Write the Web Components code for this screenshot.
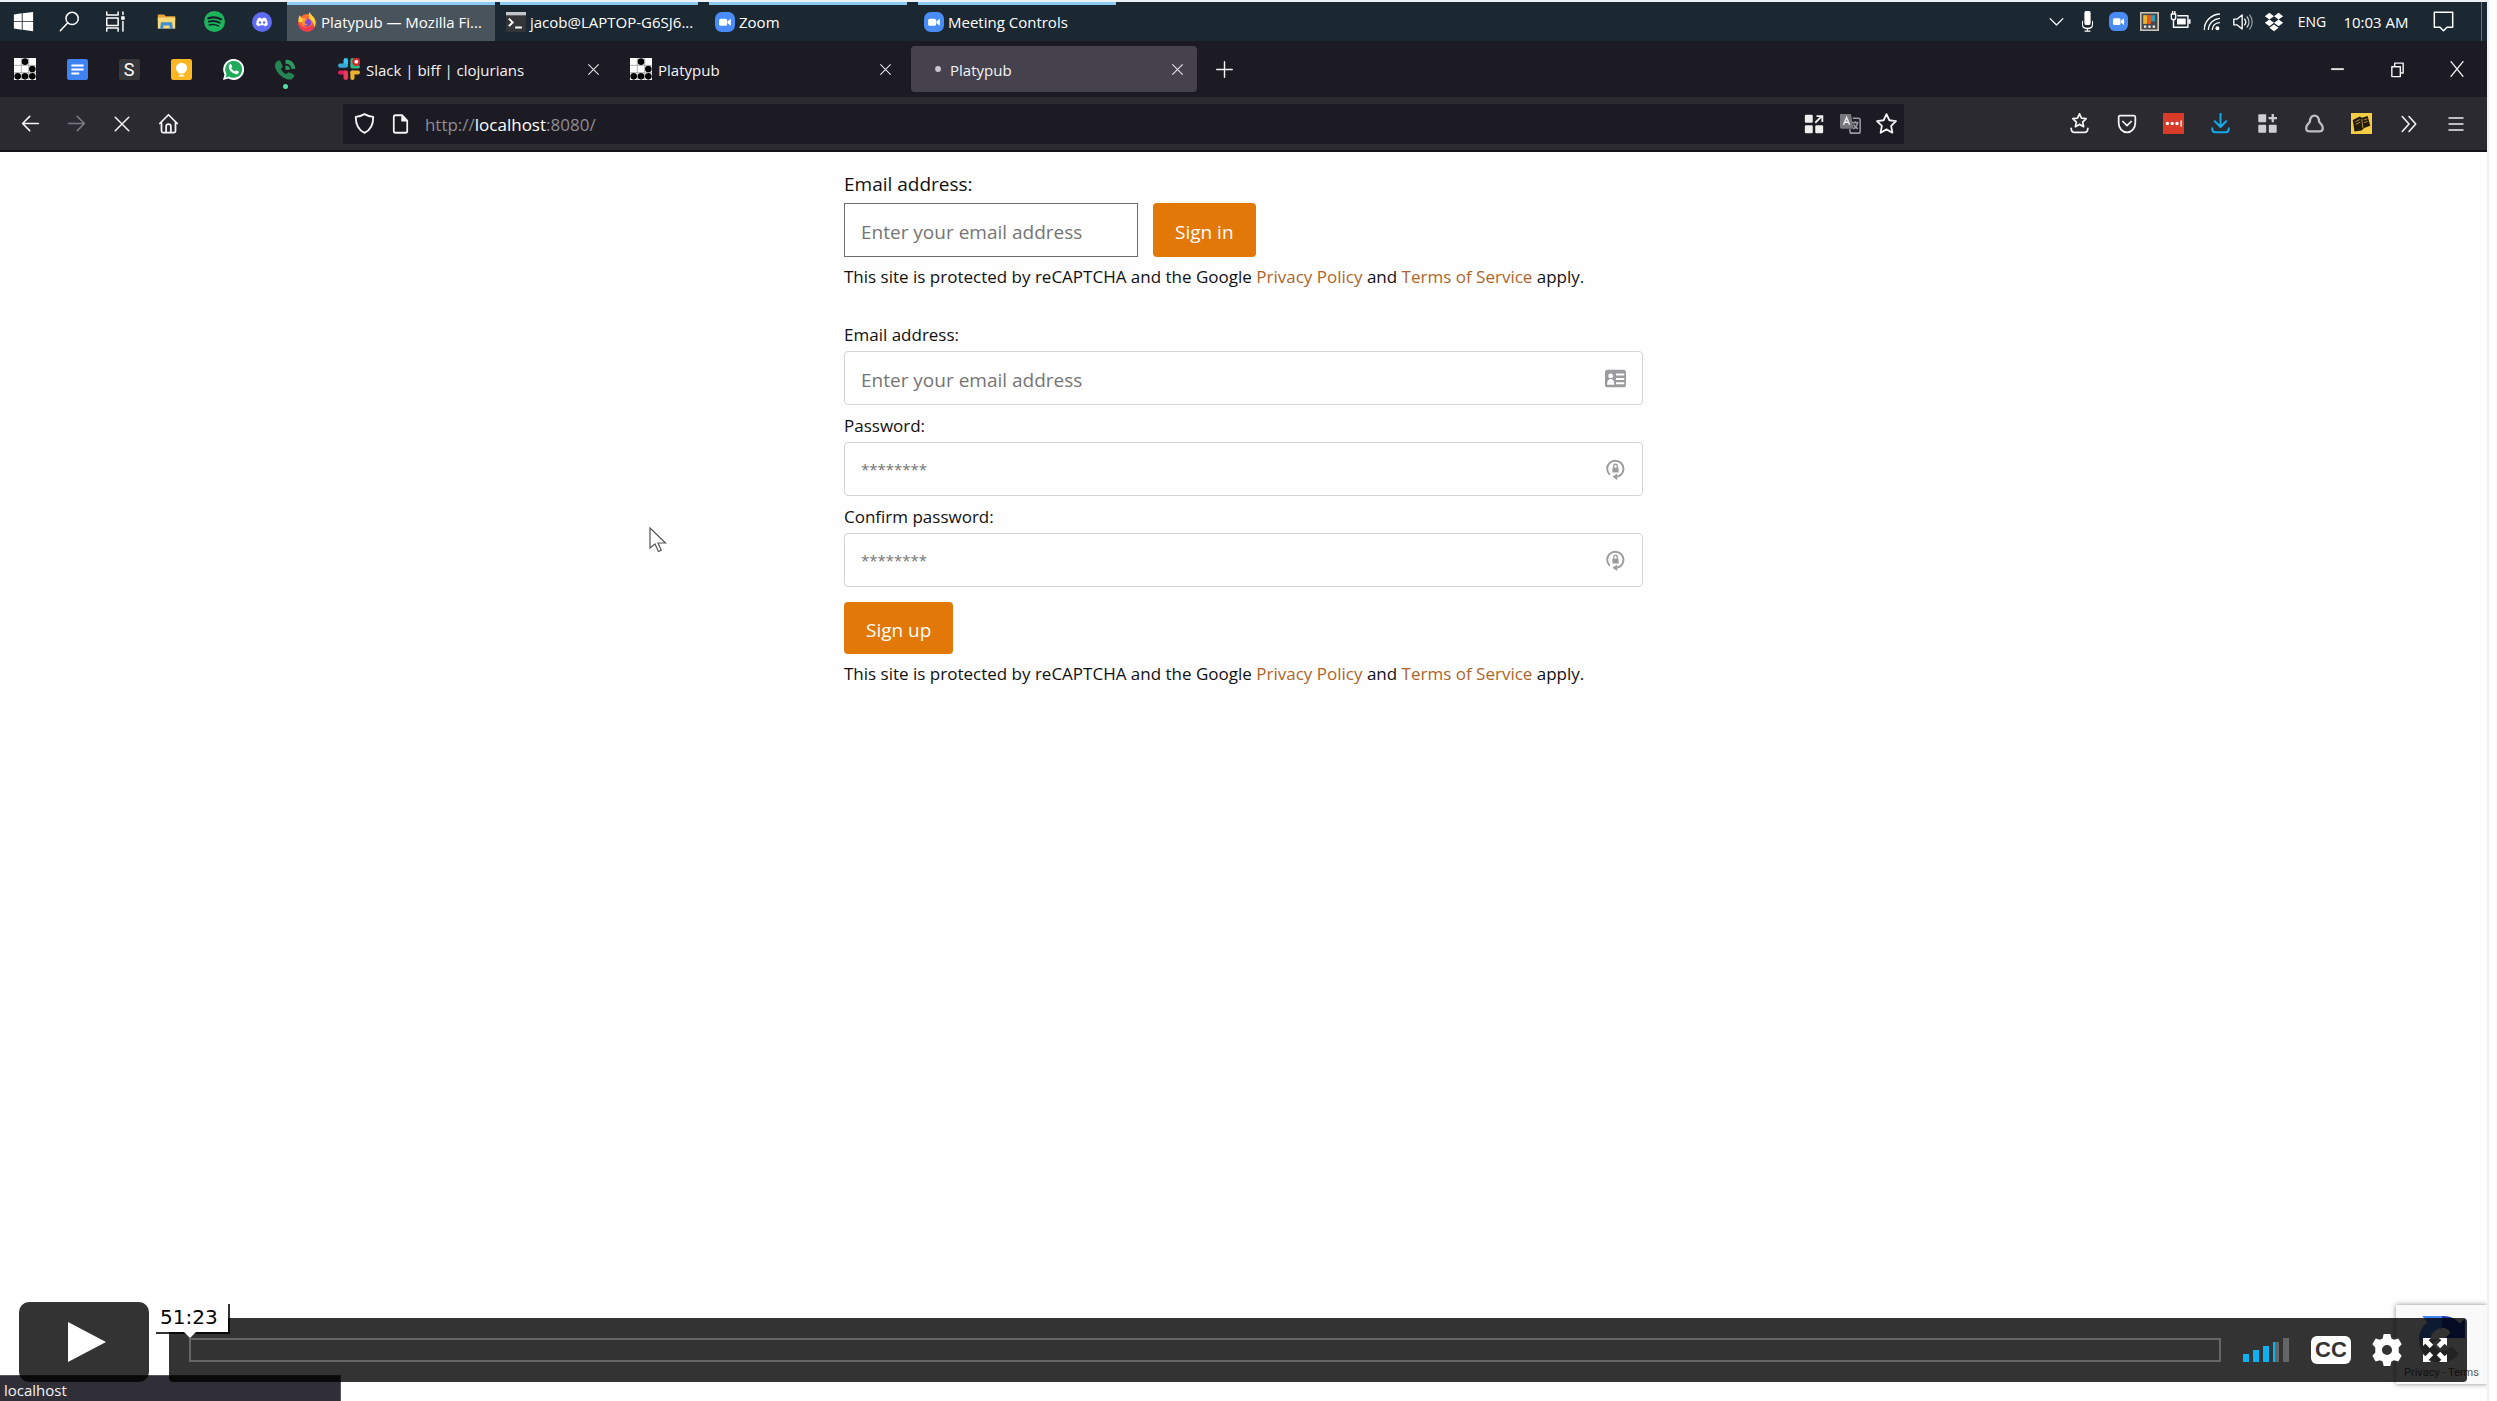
<!DOCTYPE html>
<html lang="en">
<head>
<meta charset="utf-8">
<title>Platypub</title>
<style>
html,body{margin:0;padding:0}
body{font-family:"Open Sans","Noto Sans",sans-serif;background:#fff;color:#111}
</style>
</head>
<body>
<desktop-screen>
  <task-bar slot="taskbar">
    <task-item icon="firefox" active>Platypub — Mozilla Fi...</task-item>
    <task-item icon="terminal">jacob@LAPTOP-G6SJ6...</task-item>
    <task-item icon="zoom">Zoom</task-item>
    <task-item icon="zoom">Meeting Controls</task-item>
  </task-bar>
  <tab-strip slot="tabs">
    <browser-tab icon="slack">Slack | biff | clojurians</browser-tab>
    <browser-tab icon="glider">Platypub</browser-tab>
    <browser-tab icon="loading" active>Platypub</browser-tab>
  </tab-strip>
  <nav-bar slot="nav"></nav-bar>
  <auth-page></auth-page>
  <status-bubble slot="overlay">localhost</status-bubble>
  <recaptcha-badge slot="overlay"></recaptcha-badge>
  <video-controls slot="overlay" time="51:23"></video-controls>
  <mouse-pointer slot="overlay"></mouse-pointer>
</desktop-screen>

<script>
const line='fill="none" stroke="currentColor" stroke-linecap="round" stroke-linejoin="round"';
const ICONS={
windows:'<path fill="#fff" d="M1 4l9-1.300v9H1zM11 2.600L23 1v10.700H11zM1 12.700h9v8.600L1 20zM11 12.700h12V23l-12-1.600z"/>',
search:`<g ${line} stroke-width="1.700"><circle cx="15" cy="8.500" r="7"/><path d="M10 13.500L1.500 22.500"/></g>`,
taskview:`<g ${line} stroke-width="1.700"><path d="M2 1v3.500h13V1M2 23v-3.500h13V23M2 8h13v8.500H2zM20.500 1v3M20.500 12v11"/></g><rect x="18.500" y="6" width="4" height="4" fill="#fff"/>`,
folder:'<path fill="#e9a33b" d="M1 3h8l2 2.500h12V11H1z"/><path fill="#fcd978" d="M1 7h22v14H1z"/><path fill="#3c8fd2" d="M5 13h14l1 8h-4v-4H8v4H4z"/>',
spotify:'<circle cx="12" cy="12" r="12" fill="#1db45c"/><g fill="none" stroke="#14212a" stroke-linecap="round"><path stroke-width="2.500" d="M5 8.300c5-1.600 10.500-1 14.500 1.200"/><path stroke-width="2.100" d="M5.500 12.200c4.300-1.300 9-.8 12.500 1.200"/><path stroke-width="1.700" d="M6 15.900c3.700-1 7.500-.6 10.500 1.100"/></g>',
discord:'<circle cx="12" cy="12" r="12" fill="#5f6bf0"/><path fill="#fff" d="M7.500 7.300L10 6.500l.7 1.200h2.600l.7-1.200 2.500.8c2 2.700 2.600 5.600 2.300 8.300l-3.300 1.900-1-1.700h-5l-1 1.700-3.300-1.900c-.3-2.700.3-5.600 2.300-8.300z"/><circle cx="9.500" cy="12.500" r="1.500" fill="#5f6bf0"/><circle cx="14.500" cy="12.500" r="1.500" fill="#5f6bf0"/>',
firefox:'<circle cx="12" cy="13" r="10.500" fill="#ff6d2e"/><path fill="#f23a55" d="M2 12c2 5 6 7 10 6.500s6-2.500 7-4.500l3 1c-1 5-5 8.500-10 8.500C6 23.500 1.500 19 1.500 13z"/><path fill="#ffd33f" d="M15 0c1 3 5 5 6.500 9 1.700 4 .8 7-1 9.500C20.500 13 18 10 15 8c-1.500-3-1-6 0-8zM3 4l2.500 3.500L10 8l-3 4-5 0c-.5-3 0-5.500 1-8z"/><circle cx="12.200" cy="12.700" r="4.700" fill="#7d49dd"/><path fill="#ff9630" d="M7 9c2-1.500 4-1 5 .5-1 .3-1.500 1.300-2.500 1.500C9 13 10 15 13 15c-3 2-6.500 1-7-2z"/>',
terminal:'<rect width="24" height="24" rx="2" fill="#343539"/><path fill="#c2c5ca" d="M0 0h24v4H0z"/><path fill="none" stroke="#fff" stroke-width="2.400" d="M3.500 8l4.500 4.500L3.500 17M11 18.500h8"/>',
zoom:'<rect width="24" height="24" rx="8" fill="#4a8cf7"/><rect x="5" y="8" width="9.500" height="8.500" rx="1.800" fill="#fff"/><path fill="#fff" d="M15 11l4-3v8.500l-4-3z"/>',
chevron:`<path ${line} stroke-width="1.800" d="M3 8l9 9 9-9"/>`,
mic:`<rect x="7" y="0" width="10" height="16" rx="2.500" fill="#fff"/><path ${line} stroke-width="1.700" d="M4 12v3.500c0 3 3 4.500 8 4.500s8-1.500 8-4.500V12M12 20v3M8 23h8"/>`,
palette:'<rect x="1" y="1" width="22" height="22" fill="#45474a" stroke="#c9c3b9" stroke-width="2"/><path fill="#edb42d" d="M4 4h5v11H4z"/><path fill="#e25a24" d="M9 4h5v11H9z"/><path fill="#2b9fb9" d="M14 4h5v8h-5z"/><path fill="#eee" d="M5 17h3v3H5zM10.500 17h3v3h-3zM16 17h3v3h-3z"/>',
battery:`<g ${line} stroke-width="1.600"><path d="M1.500 3.500v3.500c0 2 1 3 2.500 3s2.500-1 2.500-3V3.500zM3 3V0M5.500 3V0M4 10v8.500h16.500v-13H9"/></g><path fill="#fff" d="M8 8.500h10v7H8zM21 9.500h2.500v5H21z"/>`,
wifi:`<g ${line} stroke-width="1.700"><path d="M3 22C3 12 11 3.500 22 2.500M8 22C8.500 14.500 14 9 22 8M13 22c.5-4.500 4-8 9-8.500"/></g><circle cx="19.500" cy="20.500" r="2.500" fill="#fff"/>`,
volume:`<g ${line} stroke-width="1.600"><path d="M1 8.500h4l6-5v17l-6-5H1zM14 8.500c1.500 2 1.500 5 0 7"/><path opacity=".75" d="M17 6c2.700 3.500 2.700 8.500 0 12"/><path opacity=".5" d="M20 3.500c4 5 4 12 0 17"/></g>`,
dropbox:'<path fill="#fff" d="M6.500 1l5.500 4-5.500 4L1 5zM17.500 1L23 5l-5.500 4L12 5zM6.500 9l5.500 4-5.500 4L1 13zM17.500 9l5.500 4-5.500 4-5.500-4zM12 15l5.500 4-5.500 4-5.500-4z"/>',
notice:`<path ${line} stroke-width="1.700" d="M1.500 1.500h21v17H16l-4 4-4-4H1.500z"/>`,
glider:'<path fill="#fff" d="M0 0h24v24H0z"/><path stroke="#aaa" d="M8 0v24M16 0v24M0 8h24M0 16h24"/><g fill="#000"><circle cx="12" cy="4" r="3.600"/><circle cx="20" cy="12" r="3.600"/><circle cx="4" cy="20" r="3.600"/><circle cx="12" cy="20" r="3.600"/><circle cx="20" cy="20" r="3.600"/></g>',
docs:'<rect width="24" height="24" rx="2.500" fill="#3f83f2"/><path stroke="#fff" stroke-width="2.200" d="M5 7.500h14M5 12h14M5 16.500h9"/>',
keep:'<rect width="24" height="24" rx="2.500" fill="#fbb824"/><circle cx="12" cy="10.500" r="6.300" fill="#fff"/><path fill="#fff" d="M8.500 14h7v2h-7zM9 18h6v2H9z"/>',
whatsapp:'<path fill="#fff" d="M0 24l1.700-6.200A12 12 0 1 1 6.300 22.400z"/><path fill="#1faa59" d="M3 21l1-4A9.700 9.700 0 1 1 7 20z"/><path fill="#fff" d="M7.500 6.200c.6-.7 1.700-.6 2 .1l.9 2.100c.2.600-.7 1.500-1 2 1 2 2.300 3 4.300 3.900.6-.5 1.100-1.500 1.800-1.300l2.200 1.100c.8.500.2 2.300-1 2.900-2.300 1-5.500-.6-7.500-2.600S5.500 8.500 7.500 6.200z"/>',
phone:'<path fill="#258552" d="M1 4c2-3 5-3 6 0l2 5-2.500 2.500c1.500 2.500 3.500 4.500 6 6l3-2.500 5 2c2.500 1.500 1.500 4.500-1.500 6C11 26-4 12 1 4z"/><path fill="#2d9961" d="M12 1c6-1 11 4 11 10l-4 .5C18.500 8 16 5.500 12 5.500zM12 7.500c3 0 5 1.800 5.200 4.500L12 12.500z"/>',
slack:'<g><rect x="6" y="0" width="5" height="9" rx="2.500" fill="#36c5f0"/><rect x="0" y="6" width="11" height="4.500" rx="2.200" fill="#36a9d8"/><rect x="13.500" y="0" width="4.500" height="10.500" rx="2.200" fill="#2eb67d"/><rect x="13.500" y="7.500" width="10.500" height="4" rx="2" fill="#2eb67d"/><rect x="0" y="13.500" width="10.500" height="4.500" rx="2.200" fill="#e01e5a"/><rect x="6" y="13.500" width="5" height="10.500" rx="2.500" fill="#e8385b"/><rect x="13.500" y="13.500" width="10.500" height="4.500" rx="2.200" fill="#ecb22e"/><rect x="13.500" y="13.500" width="4.500" height="10.500" rx="2.200" fill="#ecb22e"/></g><circle cx="20" cy="4" r="4.600" fill="#d3252b"/><circle cx="20" cy="4" r="2" fill="#fff"/>',
loading:'<circle cx="17.500" cy="12" r="3.200" fill="#c9c7cf"/>',
close:`<path ${line} stroke-width="2" d="M3 3l18 18M21 3L3 21"/>`,
winclose:`<path ${line} stroke-width="2" d="M3 1l18 22M21 1L3 23"/>`,
plus:`<path ${line} stroke-width="2" d="M12 1v22M1 12h22"/>`,
minimize:'<path stroke="#ddd" stroke-width="2.500" d="M4 11.500h16"/>',
restore:`<path ${line} stroke-width="2" d="M4 8h12v14H4zM8 8V3h12v14h-4"/>`,
back:`<path ${line} stroke-width="2" d="M22 12H2.500M11 3l-9 9 9 9"/>`,
forward:`<path ${line} stroke-width="2" d="M2 12h19.500M13 3l9 9-9 9"/>`,
home:`<path ${line} stroke-width="2" d="M2 12L12 2l10 10M4 11v9.500c0 1 .8 1.800 1.800 1.800h12.400c1 0 1.800-.8 1.800-1.800V11M9.300 22v-6.500a2.700 2.700 0 0 1 5.400 0V22"/>`,
shield:`<path ${line} stroke-width="2.100" d="M12 1.300c3 1.700 6.300 2.800 10 3.200 0 9-3 15-10 18.200C5 19.500 2 13.500 2 4.500c3.700-.4 7-1.500 10-3.200z"/>`,
page:`<path ${line} stroke-width="2.200" d="M5.500 1.500h8.500l6.500 6.500v12.500c0 1-.8 2-2 2H5.500c-1.200 0-2-1-2-2v-17c0-1 .8-2 2-2z"/><path fill="#fff" d="M13 1.500V9h7.500z"/>`,
apps:'<g fill="#eee"><rect x="1" y="1" width="9.500" height="9.500" rx="1.500"/><rect x="1" y="13.500" width="9.500" height="9.500" rx="1.500"/><rect x="13.500" y="13.500" width="9.500" height="9.500" rx="1.500"/></g><path fill="none" stroke="#eee" stroke-width="2.200" d="M13.500 10.500l7-7M15 2.500h7v7"/>',
translate:`<path fill="#77767c" d="M0 1h12.500l3 17H2c-1.200 0-2-.8-2-2z"/><path fill="none" stroke="#e8e8e8" stroke-width="1.700" d="M4 13.500L7.500 5 11 13.500M5.300 10.500h4.500"/><path fill="none" stroke="#9a99a0" stroke-width="1.800" d="M14.500 6H21c1 0 2 .8 2 2v13c0 1-.8 2-2 2H12l-1-4.500M14 11h7M17.500 9.500V11M20 11c-.5 3.500-2.500 6-5 7M15.500 13c1 2 2.700 4 5 5"/>`,
star:`<path ${line} stroke-width="2.100" d="M12 1.300l3.300 7 7.500 1-5.500 5.400 1.400 7.800L12 18.700l-6.700 3.800 1.400-7.800L1.200 9.300l7.500-1z"/>`,
bookmarks:`<path ${line} stroke-width="2" d="M12 1l2.300 4.900 5.300.6-4 3.800 1.100 5.300L12 13l-4.700 2.600 1.100-5.300-4-3.800 5.300-.6zM2.500 17.500c0 3 .8 4.500 3 4.500h13c2.200 0 3-1.500 3-4.500"/>`,
pocket:`<path ${line} stroke-width="2.100" d="M3.500 2h17C21.500 2 22 3 22 4v6.500C22 17 17.500 22 12 22S2 17 2 10.500V4c0-1 .5-2 1.500-2zM7 9l5 5 5-5"/>`,
lastpass:'<path fill="#da3a28" d="M0 0h24v24H0z"/><g fill="#fff"><circle cx="5" cy="12" r="1.900"/><circle cx="10.500" cy="12" r="1.900"/><circle cx="16" cy="12" r="1.900"/><path d="M20 8.500h1.500v7H20z"/></g>',
download:`<path ${line} stroke-width="2.300" d="M12 1v14.500M5.500 9.500L12 16l6.500-6.500M2.500 17.500c0 3 .8 4.500 3 4.500h13c2.200 0 3-1.500 3-4.500"/>`,
addons:'<g fill="#cfced4"><rect x="1.500" y="1.500" width="9" height="9" rx="1"/><rect x="1.500" y="13.500" width="9" height="9" rx="1"/><rect x="13.500" y="13.500" width="9" height="9" rx="1"/></g><path stroke="#cfced4" stroke-width="2.600" d="M18 1v9.500M13.200 5.800h9.600"/>',
bell:`<path ${line} stroke-width="2.600" d="M12 3c3.500 0 5 2.700 5.300 7 .7 1.500 4.200 3 4.200 7 0 3-1 4-4 4h-11c-3 0-4-1-4-4 0-4 3.500-5.500 4.200-7C7 5.700 8.500 3 12 3z"/>`,
book:'<path fill="#f5cc46" d="M0 0h24v24H0z"/><path fill="#211b10" d="M2 8l8-4 2.500 1.500L19 3.500l3 11-7 2.500-3 3-8 1z"/><path fill="none" stroke="#c99c2a" d="M5 10l5-2.500M5.500 13l5-2.500M14.500 8l4-1.500M15 11l4-1.500M12.300 7l1.200 10"/>',
more:`<path ${line} stroke-width="2.100" d="M3 2l9 10-9 10M12 2l9 10-9 10"/>`,
menu:'<path stroke="#eee" stroke-width="2" d="M2 4h20M2 12h20M2 20h20"/>',
card:'<rect x="0" y="2" width="24" height="20" rx="3" fill="#9b9b9d"/><circle cx="6.500" cy="9" r="2.800" fill="#fff"/><path fill="#fff" d="M2.500 19c0-4 1-6.500 4-6.500s4 2.500 4 6.500z"/><path stroke="#fff" stroke-width="2.300" d="M12.500 7.500H22M12.500 12.500H22M12.500 17.500H22"/>',
lock:'<path fill="none" stroke="#9b9b9d" stroke-width="2.200" d="M5.500 18a9.300 9.300 0 1 1 13-.3c-1.200 1.200-2.500 2-4.500 2.300"/><path fill="#9b9b9d" d="M8.500 10h7v5.500h-7zM14 16.500V24l-5.500-3.700z"/><path fill="none" stroke="#9b9b9d" stroke-width="1.500" d="M10 10.500V8a2 2 0 0 1 4 0v2.500"/>',
play:'<path fill="#fff" d="M0 0l24 12L0 24z"/>',
gear:'<path fill="#fff" fill-rule="evenodd" d="M9.500 0h5l.8 3.300 2 1.100 3.200-1L23 7.700l-2.200 2.500v3.600L23 16.300l-2.500 4.300-3.200-1-2 1.100-.8 3.300h-5l-.8-3.300-2-1.100-3.200 1L1 16.300l2.200-2.500v-3.600L1 7.700l2.500-4.300 3.200 1 2-1.100zM12 8.200a3.800 3.800 0 1 0 0 7.600 3.800 3.800 0 0 0 0-7.600z"/>',
expand:'<path fill="#fff" d="M0 0h8L5.700 2.300l4.500 4.500-3.400 3.400-4.500-4.500L0 8zM24 0v8l-2.300-2.300-4.500 4.500-3.400-3.400 4.500-4.500L16 0zM0 24v-8l2.300 2.300 4.500-4.500 3.400 3.400-4.500 4.500L8 24zM24 24h-8l2.300-2.300-4.500-4.500 3.400-3.400 4.500 4.500L24 16z"/>',
volumebars:'<path fill="#0bb1f0" d="M0 16h6v8H0zM10 12h6v12h-6zM20 8h6v16h-6zM30 4h2v20h-2z"/><path fill="#666" d="M32 4h4v20h-4zM40 0h6v24h-6z"/>',
recaptcha:'<path fill="#1c3aa9" d="M24 2v11a10 10 0 0 1 8 5l-5 5h19V4l-5 5A21 21 0 0 0 24 2z"/><path fill="#4285f4" d="M5 2l5 6a21 21 0 0 0-8 17h11c0-5 3-9 8-11l3 0V2z"/><path fill="#ababab" d="M2 25a21 21 0 0 0 38 13l-7-7c-6 7-15 4-18-3l6-4z"/>'
};
const BOXES={volumebars:'0 0 46 24',recaptcha:'0 0 48 48'};

class UiIcon extends HTMLElement{
constructor(){
  super();
  this.attachShadow({mode:'open'});
}
connectedCallback(){
  const name=this.getAttribute('name');
  const w=this.getAttribute('w')||this.getAttribute('size')||21;
  const h=this.getAttribute('size')||21;
  this.shadowRoot.innerHTML=`
<style>:host{display:block;flex:none}svg{display:block}</style>
<svg width="${w}" height="${h}" viewBox="${BOXES[name]||'0 0 24 24'}" preserveAspectRatio="none" aria-hidden="true">${ICONS[name]}</svg>`;
}
}

// shared by every bar that holds icon buttons
const BUTTON_CSS=`
button{flex:none;display:flex;align-items:center;justify-content:center;align-self:stretch;margin:0;padding:0;border:0;background:none;color:inherit;font:inherit}
`;
const iconButton=([name,label,size=21,cls='',w=''])=>`<button aria-label="${label}" class="${cls}"><ui-icon name="${name}" size="${size}" ${w?`w="${w}"`:''}></ui-icon></button>`;

class DesktopScreen extends HTMLElement{
constructor(){
  super();
  this.attachShadow({mode:'open'}).innerHTML=`
<style>
:host{display:block;position:relative;box-sizing:border-box;min-height:100vh;padding-right:8px;background:#fff}
.frame{display:flex;flex-direction:column;box-sizing:border-box;min-height:100vh;border:solid #edf2f6;border-width:2px 2px 0 0}
main{flex:1;background:#fefefe}
</style>
<div class="frame">
  <slot name="taskbar"></slot>
  <slot name="tabs"></slot>
  <slot name="nav"></slot>
  <main><slot></slot></main>
</div>
<slot name="overlay"></slot>`;
}
}

class TaskBar extends HTMLElement{
constructor(){
  super();
  const system=[['windows','Start'],['search','Search'],['taskview','Task view']];
  const pinned=[['folder','File Explorer',19],['spotify','Spotify'],['discord','Discord',20]];
  const tray=[['chevron','Show hidden icons',17],['mic','Microphone',21,'','15'],['zoom','Zoom',19],['palette','PowerToys',19],['battery','Battery',21],['wifi','Network',19],['volume','Volume',20],['dropbox','Dropbox',20]];
  this.attachShadow({mode:'open'}).innerHTML=`
<style>
:host{display:flex;align-items:center;height:39px;background:#1b2832;color:#fff;font-size:15px;line-height:20px}
${BUTTON_CSS}
div{display:flex;align-self:stretch}
.system button{width:46px}
.pinned{padding:0 1px 0 4px}
.pinned button{width:48px}
.tasks{flex:1;gap:1px}
.tray button{width:31px}
.tray .lang{width:46px;font-size:14px}
.tray .clock{width:82px;font-size:15px}
.tray .notice{width:52px}
.peek{width:5px;margin-left:12px;border-left:1px solid #66707a}
</style>
<div class="system">${system.map(iconButton).join('')}</div>
<div class="pinned">${pinned.map(iconButton).join('')}</div>
<div class="tasks"><slot></slot></div>
<div class="tray">${tray.map(iconButton).join('')}
  <button class="lang">ENG</button>
  <button class="clock">10:03 AM</button>
  ${iconButton(['notice','Notifications',21,'notice'])}
</div>
<div class="peek"></div>`;
}
}

class TaskItem extends HTMLElement{
constructor(){
  super();
  this.attachShadow({mode:'open'});
}
connectedCallback(){
  this.shadowRoot.innerHTML=`
<style>
:host{display:flex;width:208px;padding:0 6px 0 4px;box-sizing:border-box}
:host([active]){padding:0;background:#49535c}
button{flex:1;display:flex;align-items:center;gap:4px;min-width:0;margin:0;padding:0 6px 3px;border:0;border-top:3px solid #8ccdf8;background:none;color:#fff;font:inherit;white-space:nowrap}
:host([active]) button{padding:0 10px 3px}
</style>
<button><ui-icon name="${this.getAttribute('icon')}" size="20"></ui-icon><span><slot></slot></span></button>`;
}
}

class TabStrip extends HTMLElement{
constructor(){
  super();
  this.attachShadow({mode:'open'}).innerHTML=`
<style>
:host{display:flex;align-items:center;height:56px;background:#1c1a22;color:#f4f4f6;font-size:15px;line-height:20px}
${BUTTON_CSS}
div{display:flex;align-self:stretch}
.pinned{gap:2px;padding-right:17px}
.pinned button{width:50px;position:relative}
.letter span{width:21px;height:21px;background:#37373b;border-radius:2px;color:#fff;font:18px/21px Roboto,sans-serif}
.call::after{content:"";position:absolute;left:23px;bottom:8px;width:5px;height:5px;border-radius:50%;background:#53e0a5}
.tabs{flex:1;gap:6px;align-items:center}
.new{width:42px}
.window button{width:60px}
</style>
<div class="pinned">
  ${iconButton(['glider','Platypub',22])}
  ${iconButton(['docs','Google Docs'])}
  <button class="letter"><span>S</span></button>
  ${iconButton(['keep','Google Keep'])}
  ${iconButton(['whatsapp','WhatsApp'])}
  ${iconButton(['phone','Google Voice',21,'call'])}
</div>
<div class="tabs"><slot></slot>${iconButton(['plus','New tab',17,'new'])}</div>
<div class="window">
  ${iconButton(['minimize','Minimize',19])}
  ${iconButton(['restore','Restore',17])}
  ${iconButton(['winclose','Close',16])}
</div>`;
}
}

class BrowserTab extends HTMLElement{
constructor(){
  super();
  this.attachShadow({mode:'open'});
}
connectedCallback(){
  this.shadowRoot.innerHTML=`
<style>
:host{display:flex;align-items:center;gap:6px;box-sizing:border-box;width:286px;height:46px;padding:0 8px 0 11px;border-radius:4px}
:host([active]){background:#45424d}
${BUTTON_CSS}
span{flex:1;padding-top:2px;white-space:nowrap}
button{width:24px;color:#e4e3e8}
</style>
<ui-icon name="${this.getAttribute('icon')}" size="22"></ui-icon>
<span><slot></slot></span>
${iconButton(['close','Close tab',13])}`;
}
}

class NavBar extends HTMLElement{
constructor(){
  super();
  const left=[['back','Back',19],['forward','Forward',19,'off'],['close','Stop',18],['home','Home',21]];
  const right=[['bookmarks','Bookmarks',21],['pocket','Pocket',20],['lastpass','Passwords',21],['download','Downloads',21,'blue'],['addons','Extensions',21],['bell','Alerts',21,'soft'],['book','Dictionary',21],['more','More tools',18],['menu','Menu',18]];
  this.attachShadow({mode:'open'}).innerHTML=`
<style>
:host{display:flex;align-items:center;height:53px;background:#2b2a31;border-bottom:2px solid #15131a;color:#f4f4f6;font-size:17px;line-height:24px}
${BUTTON_CSS}
div{display:flex;align-self:stretch}
.left{padding-left:7px}
.left button{width:46px}
.off{color:#7b7a82}
.blue{color:#12a8ea}
.soft{color:#bdbcc2}
.gap{flex:4}
.url{flex:41;align-self:center;height:40px;padding:0 0 0 4px;align-items:center;background:#1c1a22}
.url button{width:36px}
.text{flex:1;padding:2px 0 0 6px;color:#8e8d95;outline:0}
b{font-weight:400;color:#fff}
.right{padding-right:8px}
.right button{width:47px}
</style>
<div class="left">${left.map(iconButton).join('')}</div>
<div class="gap"></div>
<div class="url">
  ${iconButton(['shield','Tracking protection'])}
  ${iconButton(['page','Site information',20,'','19'])}
  <span class="text" role="textbox" contenteditable="true" spellcheck="false" aria-label="Address">http://<b>localhost</b>:8080/</span>
  ${iconButton(['apps','Apps',20])}
  ${iconButton(['translate','Translate'])}
  ${iconButton(['star','Bookmark',21])}
</div>
<div class="gap"></div>
<div class="right">${right.map(iconButton).join('')}</div>`;
}
}

class FormField extends HTMLElement{
constructor(){
  super();
  this.attachShadow({mode:'open'});
}
connectedCallback(){
  const type=this.getAttribute('type')||'email';
  const icon=this.getAttribute('icon');
  this.shadowRoot.innerHTML=`
<style>
:host{display:block}
label{display:block;margin-bottom:4px;font-size:17px;line-height:25px}
.box{display:flex;align-items:center;box-sizing:border-box;height:54px;padding:0 16px;border:1px solid #d4d4d6;border-radius:4px;background:#fff}
:host([plain]) label{font-size:19px;line-height:30px}
:host([plain]) .box{border-color:#6b6d73;border-radius:0}
input{flex:1;min-width:0;padding:3px 0 0;border:0;outline:0;background:none;font:inherit;font-size:19px;color:#111}
input::placeholder{color:#757575;opacity:1}
input[type=password]{padding:0;font-size:15px}
</style>
<label for="field">${this.getAttribute('label')}</label>
<div class="box">
  <input id="field" type="${type}" placeholder="${type==='password'?'********':'Enter your email address'}">
  ${icon?`<ui-icon name="${icon}"></ui-icon>`:''}
</div>`;
}
}

class SubmitButton extends HTMLElement{
constructor(){
  super();
  this.attachShadow({mode:'open'}).innerHTML=`
<style>
:host{display:block}
button{display:block;height:var(--button-height,52px);padding:3px 22px 0;border:0;border-radius:4px;background:#e27808;color:#fff;font:inherit;font-size:19px}
</style>
<button type="submit"><slot></slot></button>`;
}
}

class LegalNote extends HTMLElement{
constructor(){
  super();
  this.attachShadow({mode:'open'}).innerHTML=`
<style>
:host{display:block;font-size:17px;line-height:25px;margin-top:7px}
p{margin:0}
a{color:#ad652b;text-decoration:none}
</style>
<p>This site is protected by reCAPTCHA and the Google <a href="#privacy">Privacy Policy</a> and <a href="#terms">Terms of Service</a> apply.</p>`;
}
}

class AuthPage extends HTMLElement{
constructor(){
  super();
  this.attachShadow({mode:'open'}).innerHTML=`
<style>
:host{display:block;max-width:799px;margin:0 auto;padding:17px 0 100px}
.signin{display:flex;align-items:flex-end;gap:15px;--button-height:54px}
.signin form-field{width:294px}
.signup{display:flex;flex-direction:column;gap:8px;margin-top:33px}
.signup submit-button{align-self:flex-start;margin-top:7px}
</style>
<form class="signin">
  <form-field plain label="Email address:"></form-field>
  <submit-button>Sign in</submit-button>
</form>
<legal-note></legal-note>
<form class="signup">
  <form-field label="Email address:" icon="card"></form-field>
  <form-field label="Password:" type="password" icon="lock"></form-field>
  <form-field label="Confirm password:" type="password" icon="lock"></form-field>
  <submit-button>Sign up</submit-button>
</form>
<legal-note></legal-note>`;
}
}

class StatusBubble extends HTMLElement{
constructor(){
  super();
  this.attachShadow({mode:'open'}).innerHTML=`
<style>
:host{display:block;position:absolute;left:0;bottom:0;box-sizing:border-box;width:341px;height:26px;padding-left:4px;border:solid #57565e;border-width:1px 1px 0 0;background:#302f37;color:#f4f4f6;font-size:15px;line-height:28px}
</style>
<slot></slot>`;
}
}

class RecaptchaBadge extends HTMLElement{
constructor(){
  super();
  this.attachShadow({mode:'open'}).innerHTML=`
<style>
:host{display:flex;flex-direction:column;align-items:center;position:absolute;right:10px;bottom:17px;box-sizing:border-box;width:91px;height:79px;padding-top:9px;background:#f9f9f9;box-shadow:0 0 5px #888;clip-path:inset(-8px 0 -8px -8px);color:#555;font:11px/18px Roboto,sans-serif}
a{color:inherit;text-decoration:none}
</style>
<ui-icon name="recaptcha" size="50"></ui-icon>
<div><a href="#privacy">Privacy</a> - <a href="#terms">Terms</a></div>`;
}
}

class VideoControls extends HTMLElement{
constructor(){
  super();
  this.attachShadow({mode:'open'});
}
connectedCallback(){
  this.shadowRoot.innerHTML=`
<style>
:host{display:flex;align-items:flex-end;gap:20px;position:absolute;left:19px;right:30px;bottom:19px}
${BUTTON_CSS}
.play{width:130px;height:80px;padding-left:6px;border-radius:10px;background:rgba(0,0,0,.8)}
.bar{flex:1;display:flex;align-items:center;height:64px;box-sizing:border-box;padding:0 20px;border-radius:4px;background:rgba(0,0,0,.8)}
.track{flex:1;height:20px;border:2px solid #666;position:relative}
.tip{position:absolute;left:-37px;top:-38px;padding:0 10px 0 6px;background:#fff;box-shadow:2px 2px 0 rgba(0,0,0,.8);color:#000;font:20px/30px "DejaVu Sans",sans-serif}
.tip::after{content:"";position:absolute;left:30px;top:30px;border:6px solid transparent;border-top-color:#fff;border-bottom:0}
.cc{align-self:center;width:40px;height:28px;margin:0 20px 0 22px;border-radius:6px;background:#fff;color:#333;font:bold 22px/28px "Liberation Sans",sans-serif}
.volume{margin-left:22px}
.gear{margin-right:20px}
</style>
<button class="play" aria-label="Play"><ui-icon name="play" size="40" w="38"></ui-icon></button>
<div class="bar">
  <div class="track"><div class="tip">${this.getAttribute('time')}</div></div>
  ${iconButton(['volumebars','Volume',24,'volume','46'])}
  <button class="cc">CC</button>
  ${iconButton(['gear','Settings',32,'gear','32'])}
  ${iconButton(['expand','Fullscreen',24])}
</div>`;
}
}

class MousePointer extends HTMLElement{
constructor(){
  super();
  this.attachShadow({mode:'open'}).innerHTML=`
<style>:host{display:block;position:absolute;left:649px;top:527px;pointer-events:none}svg{display:block}</style>
<svg width="18" height="26" viewBox="0 0 18 26" aria-hidden="true"><path d="M1 1v20l5-4 3.500 7.500 2.800-1.300L9 16h7.500z" fill="#fff" stroke="#555" stroke-width="1.200"/></svg>`;
}
}

customElements.define('ui-icon',UiIcon);
customElements.define('desktop-screen',DesktopScreen);
customElements.define('task-bar',TaskBar);
customElements.define('task-item',TaskItem);
customElements.define('tab-strip',TabStrip);
customElements.define('browser-tab',BrowserTab);
customElements.define('nav-bar',NavBar);
customElements.define('form-field',FormField);
customElements.define('submit-button',SubmitButton);
customElements.define('legal-note',LegalNote);
customElements.define('auth-page',AuthPage);
customElements.define('status-bubble',StatusBubble);
customElements.define('recaptcha-badge',RecaptchaBadge);
customElements.define('video-controls',VideoControls);
customElements.define('mouse-pointer',MousePointer);
</script>
</body>
</html>
